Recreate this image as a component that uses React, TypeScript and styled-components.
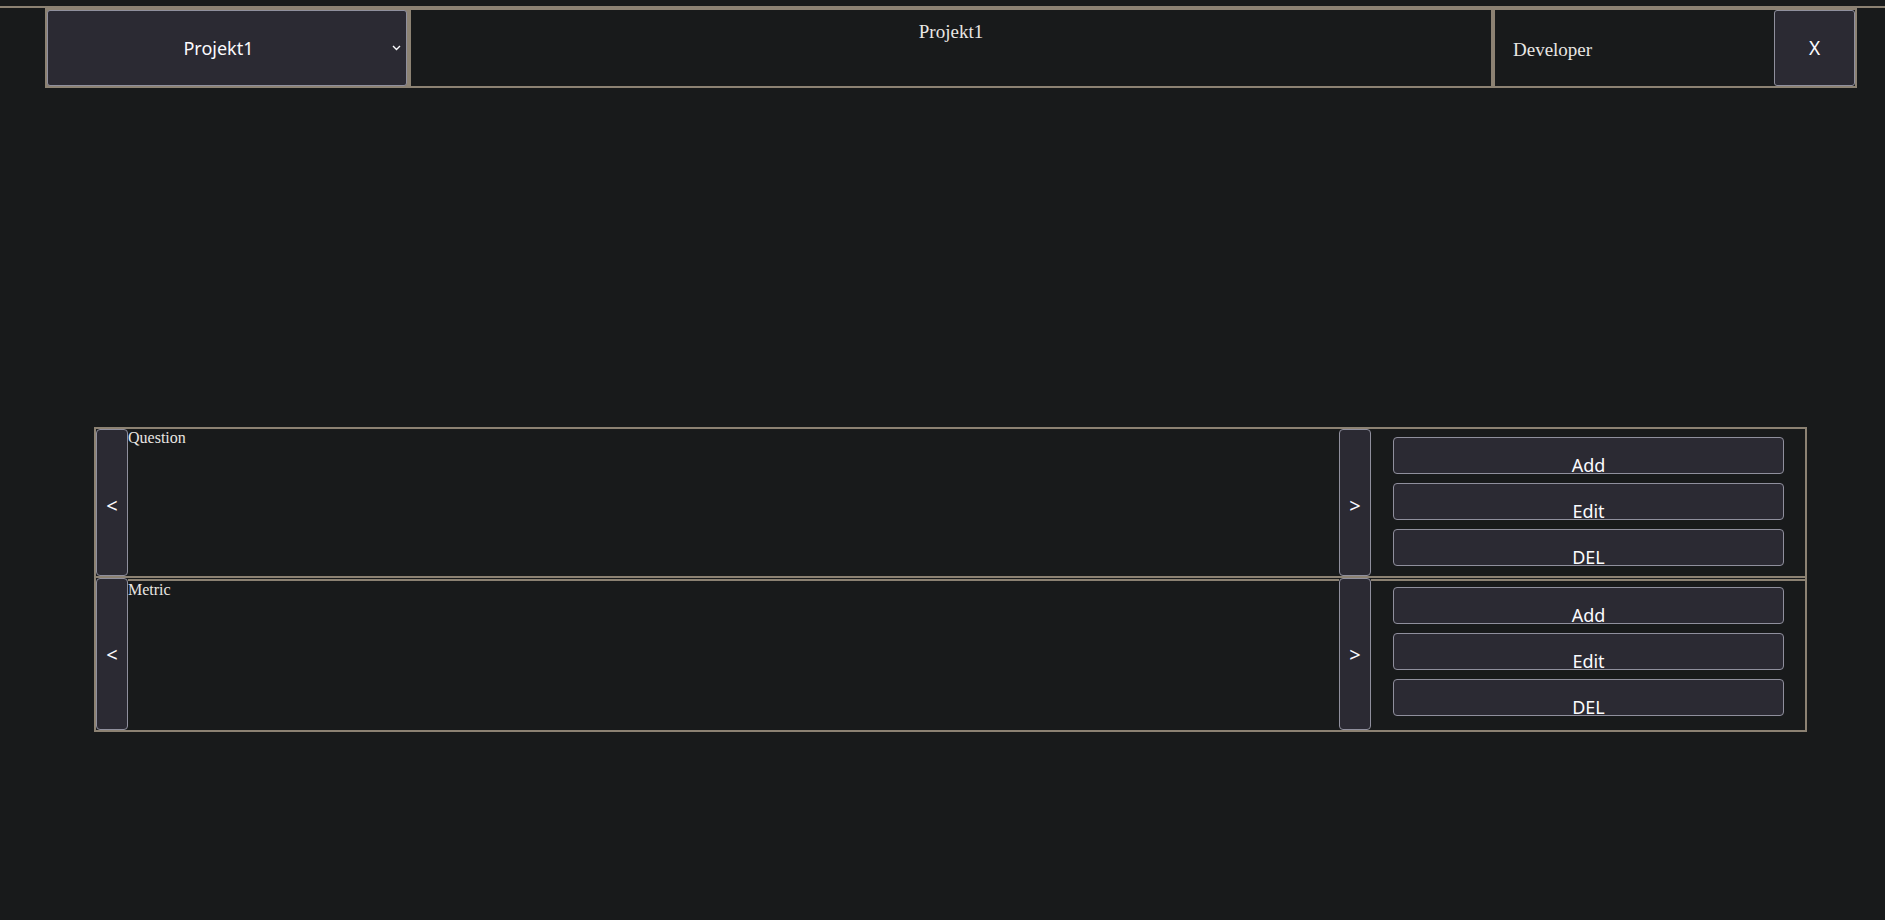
import React from 'react';
import styled, { createGlobalStyle } from 'styled-components';

const BEIGE = '#8c8273';
const BG = '#181a1b';
const BTN_BG = '#2b2a33';
const BTN_BORDER = '#8f8f9d';

const GlobalStyle = createGlobalStyle`
  html, body { margin: 0; padding: 0; background: ${BG}; }
  body {
    font-family: "Liberation Serif", "Times New Roman", serif;
    color: #e8e6e3;
    font-size: 16px;
  }
  * { box-sizing: border-box; }
`;

const Page = styled.div`
  min-height: 920px;
  padding-top: 6px;
`;

const TopRule = styled.div`
  height: 2px;
  background: ${BEIGE};
`;

const Header = styled.header`
  margin: 0 28px 0 45px;
  border: 2px solid ${BEIGE};
  border-top: none;
  background: ${BEIGE};
  display: flex;
  gap: 4px;
  height: 80px;
  padding-top: 2px;
`;

const SelectCell = styled.div`
  flex: 0 0 360px;
  display: flex;
`;

const ProjectSelect = styled.div`
  flex: 1;
  display: grid;
  grid-template-columns: 1fr 14px;
  align-items: center;
  background: ${BTN_BG};
  border: 1px solid ${BTN_BORDER};
  border-radius: 3px;
  color: #fbfbfe;
  font-family: "Noto Sans", "Open Sans", sans-serif;
  font-size: 18px;
  cursor: pointer;
`;

const SelectText = styled.span`
  text-align: center;
  padding-right: 3px;
`;

const Chevron = styled.svg`
  width: 9px;
  height: 6px;
`;

const TitleCell = styled.div`
  flex: 1;
  background: ${BG};
  text-align: center;
  padding-top: 11px;
  font-size: 19px;
`;

const UserCell = styled.div`
  flex: 0 0 360px;
  background: ${BG};
  display: flex;
  align-items: center;
  justify-content: space-between;
  padding-left: 18px;
  font-size: 19px;
`;

const UserName = styled.span`
  padding-top: 4px;
`;

const CloseButton = styled.button`
  width: 81px;
  height: 76px;
  background: ${BTN_BG};
  border: 1px solid ${BTN_BORDER};
  border-radius: 3px;
  color: #fbfbfe;
  font-family: "Noto Sans", "Open Sans", sans-serif;
  font-size: 19px;
  padding: 0;
  cursor: pointer;
`;

const Panel = styled.section`
  margin: 339px 78px 0 94px;
  border: 2px solid ${BEIGE};
`;

const Row = styled.div<{ $first?: boolean }>`
  display: flex;
  height: ${(p) => (p.$first ? '149px' : '152px')};
  border-bottom: ${(p) => (p.$first ? `2px solid ${BEIGE}` : 'none')};
`;

const NavButton = styled.button<{ $shift?: number }>`
  flex: 0 0 32px;
  background: ${BTN_BG};
  border: 1px solid ${BTN_BORDER};
  border-radius: 4px;
  color: #fbfbfe;
  font-family: "Noto Sans", "Open Sans", sans-serif;
  font-size: 20px;
  padding: ${(p) => p.$shift ?? 2}px 0 0;
  cursor: pointer;
`;

const Content = styled.div<{ $divided?: boolean }>`
  flex: 1;
  margin-top: ${(p) => (p.$divided ? '1px' : '0')};
  border-top: ${(p) => (p.$divided ? `2px solid ${BEIGE}` : 'none')};
  font-size: 16px;
  line-height: normal;
`;

const Actions = styled.div<{ $divided?: boolean }>`
  flex: 0 0 434px;
  display: flex;
  flex-direction: column;
  gap: 9px;
  padding: ${(p) => (p.$divided ? '6px' : '8px')} 21px 0 22px;
  margin-top: ${(p) => (p.$divided ? '1px' : '0')};
  border-top: ${(p) => (p.$divided ? `2px solid ${BEIGE}` : 'none')};
`;

const ActionButton = styled.button`
  height: 37px;
  background: ${BTN_BG};
  border: 1px solid ${BTN_BORDER};
  border-radius: 4px;
  color: #fbfbfe;
  font-family: "Noto Sans", "Open Sans", sans-serif;
  font-size: 18px;
  line-height: 18px;
  padding: 18px 0 0;
  cursor: pointer;
`;

type Section = { label: string };

const sections: Section[] = [{ label: 'Question' }, { label: 'Metric' }];

export default function App() {
  return (
    <>
      <GlobalStyle />
      <Page>
        <TopRule />
        <Header>
          <SelectCell>
            <ProjectSelect>
              <SelectText>Projekt1</SelectText>
              <Chevron viewBox="0 0 9 6">
                <path d="M1 1 L4.5 4.5 L8 1" fill="none" stroke="#fbfbfe" strokeWidth="1.4" />
              </Chevron>
            </ProjectSelect>
          </SelectCell>
          <TitleCell>Projekt1</TitleCell>
          <UserCell>
            <UserName>Developer</UserName>
            <CloseButton>X</CloseButton>
          </UserCell>
        </Header>
        <Panel>
          {sections.map((s, i) => (
            <Row key={s.label} $first={i === 0}>
              <NavButton $shift={i === 0 ? 5 : 1}>&lt;</NavButton>
              <Content $divided={i > 0}>{s.label}</Content>
              <NavButton $shift={i === 0 ? 5 : 1}>&gt;</NavButton>
              <Actions $divided={i > 0}>
                <ActionButton>Add</ActionButton>
                <ActionButton>Edit</ActionButton>
                <ActionButton>DEL</ActionButton>
              </Actions>
            </Row>
          ))}
        </Panel>
      </Page>
    </>
  );
}
